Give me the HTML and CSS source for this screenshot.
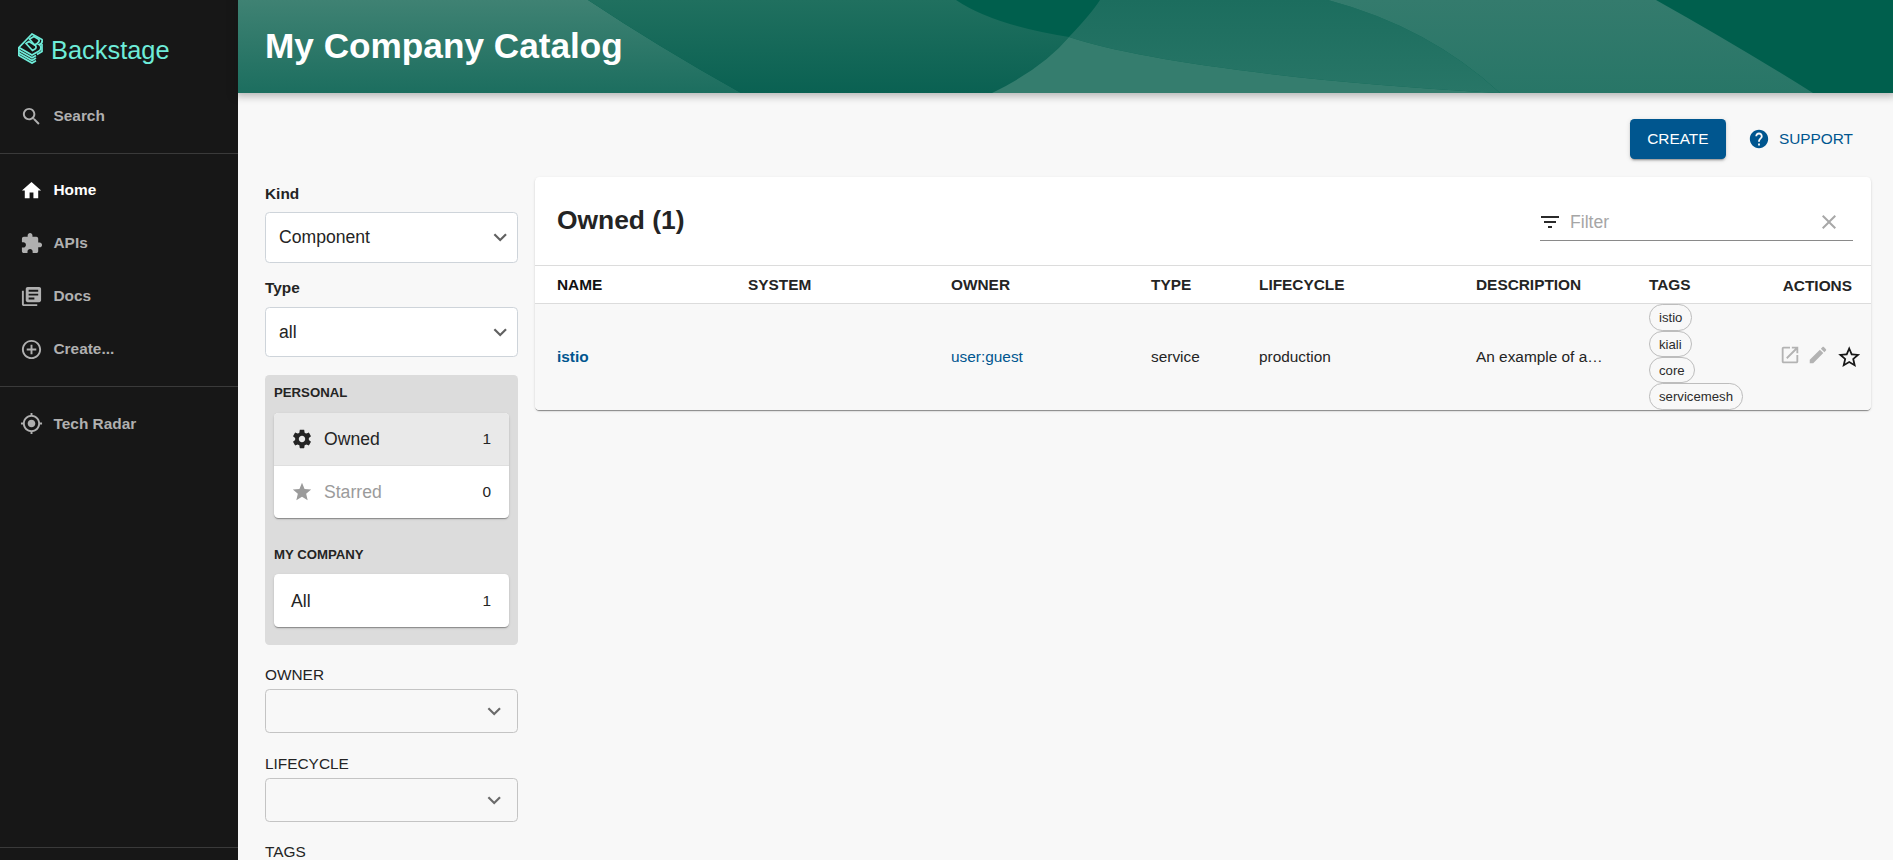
FILE: index.html
```html
<!DOCTYPE html>
<html lang="en">
<head>
    <meta charset="UTF-8">
    <title>My Company Catalog</title>
    <link rel="stylesheet" href="styles.css">
</head>
<body>
    <div class="app">
        <nav class="sidebar">
            <div class="logo">
                <svg class="logo-mark" viewBox="0 0 25 31" fill="none" stroke="#6eecd9" stroke-width="1.7">
                    <path d="M14 1 L24 6.5 C24.5 9 23.5 11 21 11.5 C23.5 13 23.5 16.5 21 18 L14 22 L1 14.5 Z"/>
                    <path d="M11.5 6 L16 3.5 L21 6.5 C21.5 8 20.5 9.5 19 10.5 L16.5 12 Z"/>
                    <path d="M8 10.5 L11 8.5 L17.5 12.5 C18.5 14 18 15.5 17 16 L14.5 17.5 Z"/>
                    <path d="M.8 17.2 L14 24.7 L18 22.4"/>
                    <path d="M.8 19.9 L14 27.4 L18 25.1"/>
                    <path d="M.8 22.6 L14 30.1 L18 27.8"/>
                    <path d="M.8 14.5 V23 M24 11 V18.5 L19 21.5"/>
                </svg>
                <span class="logo-text">Backstage</span>
            </div>
            <a class="nav-item nav-search">
                <svg class="icon" viewBox="0 0 24 24"><path d="M15.5 14h-.79l-.28-.27C15.41 12.59 16 11.11 16 9.5 16 5.91 13.09 3 9.5 3S3 5.91 3 9.5 5.91 16 9.5 16c1.61 0 3.09-.59 4.23-1.57l.27.28v.79l5 4.99L20.49 19l-4.99-5zm-6 0C7.01 14 5 11.99 5 9.5S7.01 5 9.5 5 14 7.01 14 9.5 11.99 14 9.5 14z"/></svg>
                Search
            </a>
            <div class="nav-divider nav-divider-first"></div>
            <div class="nav-group">
                <a class="nav-item active">
                    <svg class="icon" viewBox="0 0 24 24"><path d="M10 20v-6h4v6h5v-8h3L12 3 2 12h3v8z"/></svg>
                    Home
                </a>
                <a class="nav-item">
                    <svg class="icon" viewBox="0 0 24 24"><path d="M20.5 11H19V7c0-1.1-.9-2-2-2h-4V3.5C13 2.12 11.88 1 10.5 1S8 2.12 8 3.5V5H4c-1.1 0-1.99.9-1.99 2v3.8H3.5c1.49 0 2.7 1.21 2.7 2.7s-1.21 2.7-2.7 2.7H2V20c0 1.1.9 2 2 2h3.8v-1.5c0-1.49 1.21-2.7 2.7-2.7 1.49 0 2.7 1.21 2.7 2.7V22H17c1.1 0 2-.9 2-2v-4h1.5c1.38 0 2.5-1.12 2.5-2.5S21.88 11 20.5 11z"/></svg>
                    APIs
                </a>
                <a class="nav-item">
                    <svg class="icon" viewBox="0 0 24 24"><path d="M4 6H2v14c0 1.1.9 2 2 2h14v-2H4V6zm16-4H8c-1.1 0-2 .9-2 2v12c0 1.1.9 2 2 2h12c1.1 0 2-.9 2-2V4c0-1.1-.9-2-2-2zm-1 9H9V9h10v2zm-4 4H9v-2h6v2zm4-8H9V5h10v2z"/></svg>
                    Docs
                </a>
                <a class="nav-item">
                    <svg class="icon" viewBox="0 0 24 24"><path d="M13 7h-2v4H7v2h4v4h2v-4h4v-2h-4V7zm-1-5C6.48 2 2 6.48 2 12s4.48 10 10 10 10-4.48 10-10S17.52 2 12 2zm0 18c-4.41 0-8-3.59-8-8s3.59-8 8-8 8 3.59 8 8-3.59 8-8 8z"/></svg>
                    Create...
                </a>
            </div>
            <div class="nav-divider"></div>
            <div class="nav-group nav-group-radar">
                <a class="nav-item">
                    <svg class="icon" viewBox="0 0 24 24"><path d="M12 8c-2.21 0-4 1.79-4 4s1.79 4 4 4 4-1.79 4-4-1.79-4-4-4zm8.94 3c-.46-4.17-3.77-7.48-7.94-7.94V1h-2v2.06C6.83 3.52 3.52 6.83 3.06 11H1v2h2.06c.46 4.17 3.77 7.48 7.94 7.94V23h2v-2.06c4.17-.46 7.48-3.77 7.94-7.94H23v-2h-2.06zM12 19c-3.87 0-7-3.13-7-7s3.13-7 7-7 7 3.13 7 7-3.13 7-7 7z"/></svg>
                    Tech Radar
                </a>
            </div>
            <div class="nav-spacer"></div>
            <div class="nav-divider nav-divider-last"></div>
        </nav>

        <div class="main">
            <header class="page-header">
                <svg class="wave" viewBox="0 0 1655 93" preserveAspectRatio="none">
                    <defs>
                        <linearGradient id="g0" x1="0.4" y1="0" x2="0.4" y2="1"><stop offset="0" stop-color="#3f8273"/><stop offset="1" stop-color="#1c6e5f"/></linearGradient>
                        <linearGradient id="g1" x1="0" y1="0" x2="0" y2="1"><stop offset="0" stop-color="#20705f"/><stop offset="1" stop-color="#0a6152"/></linearGradient>
                        <linearGradient id="g3" x1="0" y1="0" x2="0" y2="1"><stop offset="0" stop-color="#1c6d5e"/><stop offset="1" stop-color="#287667"/></linearGradient>
                        <linearGradient id="g5" x1="0" y1="0" x2="0" y2="1"><stop offset="0" stop-color="#347b6d"/><stop offset="1" stop-color="#287667"/></linearGradient>
                    </defs>
                    <rect width="1655" height="93" fill="#005f4d"/>
                    <path fill="url(#g0)" d="M0 0 L350 0 Q419 46 503 93 L0 93 Z"/>
                    <path fill="url(#g1)" d="M350 0 L718 0 Q755 25 831 37 Q805 68 754 93 L503 93 Q419 46 350 0 Z"/>
                    <path fill="url(#g3)" d="M862 0 L1090 0 Q1191 27 1262 93 C1060 82 900 60 831 37 Q853 14 862 0 Z"/>
                    <path fill="#357d6e" d="M831 37 C900 60 1060 82 1262 93 L754 93 Q805 68 831 37 Z"/>
                    <path fill="url(#g5)" d="M1090 0 L1418 0 Q1500 46 1575 93 L1262 93 Q1191 27 1090 0 Z"/>
                </svg>
                <h1 class="page-title">My Company Catalog</h1>
            </header>

            <div class="page-body">
                <div class="toolbar">
                    <a class="btn-create">CREATE</a>
                    <a class="btn-support">
                        <svg class="icon" viewBox="0 0 24 24"><path d="M12 2C6.48 2 2 6.48 2 12s4.48 10 10 10 10-4.48 10-10S17.52 2 12 2zm1 17h-2v-2h2v2zm2.07-7.75l-.9.92C13.45 12.9 13 13.5 13 15h-2v-.5c0-1.1.45-2.1 1.17-2.83l1.24-1.26c.37-.36.59-.86.59-1.41 0-1.1-.9-2-2-2s-2 .9-2 2H8c0-2.21 1.79-4 4-4s4 1.79 4 4c0 .88-.36 1.68-.93 2.25z"/></svg>
                        SUPPORT
                    </a>
                </div>

                <div class="content">
                    <aside class="filters">
                        <div class="label label-kind">Kind</div>
                        <div class="select select-kind">
                            Component
                            <svg class="icon" viewBox="0 0 24 24"><path d="M16.59 8.59L12 13.17 7.41 8.59 6 10l6 6 6-6z"/></svg>
                        </div>
                        <div class="label label-type">Type</div>
                        <div class="select select-type">
                            all
                            <svg class="icon" viewBox="0 0 24 24"><path d="M16.59 8.59L12 13.17 7.41 8.59 6 10l6 6 6-6z"/></svg>
                        </div>

                        <div class="picker">
                            <div class="picker-title">PERSONAL</div>
                            <div class="picker-card">
                                <div class="picker-row selected">
                                    <svg class="icon" viewBox="0 0 24 24"><path d="M19.43 12.98c.04-.32.07-.64.07-.98s-.03-.66-.07-.98l2.11-1.65c.19-.15.24-.42.12-.64l-2-3.46c-.12-.22-.39-.3-.61-.22l-2.49 1c-.52-.4-1.08-.73-1.69-.98l-.38-2.65C14.46 2.18 14.25 2 14 2h-4c-.25 0-.46.18-.49.42l-.38 2.65c-.61.25-1.17.59-1.69.98l-2.49-1c-.23-.09-.49 0-.61.22l-2 3.46c-.13.22-.07.49.12.64l2.11 1.65c-.04.32-.07.65-.07.98s.03.66.07.98l-2.11 1.65c-.19.15-.24.42-.12.64l2 3.46c.12.22.39.3.61.22l2.49-1c.52.4 1.08.73 1.69.98l.38 2.65c.03.24.24.42.49.42h4c.25 0 .46-.18.49-.42l.38-2.65c.61-.25 1.17-.59 1.69-.98l2.49 1c.23.09.49 0 .61-.22l2-3.46c.12-.22.07-.49-.12-.64l-2.11-1.65zM12 15.5c-1.93 0-3.5-1.57-3.5-3.5s1.57-3.5 3.5-3.5 3.5 1.57 3.5 3.5-1.57 3.5-3.5 3.5z"/></svg>
                                    <span class="picker-name">Owned</span>
                                    <span class="picker-count">1</span>
                                </div>
                                <div class="picker-row muted">
                                    <svg class="icon" viewBox="0 0 24 24"><path d="M12 17.27L18.18 21l-1.64-7.03L22 9.24l-7.19-.61L12 2 9.19 8.63 2 9.24l5.46 4.73L5.82 21z"/></svg>
                                    <span class="picker-name">Starred</span>
                                    <span class="picker-count">0</span>
                                </div>
                            </div>
                            <div class="picker-title picker-title-second">MY COMPANY</div>
                            <div class="picker-card">
                                <div class="picker-row picker-row-plain">
                                    <span class="picker-name">All</span>
                                    <span class="picker-count">1</span>
                                </div>
                            </div>
                        </div>

                        <div class="field-label field-owner">OWNER</div>
                        <div class="combo">
                            <svg class="icon" viewBox="0 0 24 24"><path d="M16.59 8.59L12 13.17 7.41 8.59 6 10l6 6 6-6z"/></svg>
                        </div>
                        <div class="field-label">LIFECYCLE</div>
                        <div class="combo">
                            <svg class="icon" viewBox="0 0 24 24"><path d="M16.59 8.59L12 13.17 7.41 8.59 6 10l6 6 6-6z"/></svg>
                        </div>
                        <div class="field-label field-tags">TAGS</div>
                    </aside>

                    <section class="card">
                        <div class="card-header">
                            <h2 class="card-title">Owned (1)</h2>
                            <div class="search-box">
                                <svg class="icon" viewBox="0 0 24 24"><path d="M10 18h4v-2h-4v2zM3 6v2h18V6H3zm3 7h12v-2H6v2z"/></svg>
                                <span class="search-text">Filter</span>
                                <svg class="icon icon-clear" viewBox="0 0 24 24"><path d="M19 6.41L17.59 5 12 10.59 6.41 5 5 6.41 10.59 12 5 17.59 6.41 19 12 13.41 17.59 19 19 17.59 13.41 12z"/></svg>
                            </div>
                        </div>
                        <table class="table">
                            <thead>
                                <tr>
                                    <th class="col-name">NAME</th>
                                    <th class="col-system">SYSTEM</th>
                                    <th class="col-owner">OWNER</th>
                                    <th class="col-type">TYPE</th>
                                    <th class="col-lifecycle">LIFECYCLE</th>
                                    <th class="col-desc">DESCRIPTION</th>
                                    <th class="col-tags">TAGS</th>
                                    <th class="col-actions">ACTIONS</th>
                                </tr>
                            </thead>
                            <tbody>
                                <tr>
                                    <td><a class="link link-bold">istio</a></td>
                                    <td></td>
                                    <td><a class="link">user:guest</a></td>
                                    <td>service</td>
                                    <td>production</td>
                                    <td>An example of a…</td>
                                    <td class="cell-tags">
                                        <div class="chips">
                                            <span class="chip">istio</span>
                                            <span class="chip">kiali</span>
                                            <span class="chip">core</span>
                                            <span class="chip">servicemesh</span>
                                        </div>
                                    </td>
                                    <td>
                                        <div class="actions">
                                            <svg class="icon action-small" viewBox="0 0 24 24"><path d="M19 19H5V5h7V3H5c-1.11 0-2 .9-2 2v14c0 1.1.89 2 2 2h14c1.1 0 2-.9 2-2v-7h-2v7zM14 3v2h3.59l-9.83 9.83 1.41 1.41L19 6.41V10h2V3h-7z"/></svg>
                                            <svg class="icon action-small" viewBox="0 0 24 24"><path d="M3 17.25V21h3.75L17.81 9.94l-3.75-3.75L3 17.25zM20.71 7.04c.39-.39.39-1.02 0-1.41l-2.34-2.34c-.39-.39-1.02-.39-1.41 0l-1.83 1.83 3.75 3.75 1.83-1.83z"/></svg>
                                            <svg class="icon action-star" viewBox="0 0 24 24"><path d="M22 9.24l-7.19-.62L12 2 9.19 8.63 2 9.24l5.46 4.73L5.82 21 12 17.27 18.18 21l-1.63-7.03L22 9.24zM12 15.4l-3.76 2.27 1-4.28-3.32-2.88 4.38-.38L12 6.1l1.71 4.04 4.38.38-3.32 2.88 1 4.28L12 15.4z"/></svg>
                                        </div>
                                    </td>
                                </tr>
                            </tbody>
                        </table>
                    </section>
                </div>
            </div>
        </div>
    </div>
</body>
</html>
```

FILE: styles.css
```css
:root {
    --primary: #00568f;
    --text: #242424;
    --line: #dcdcdc;
}

* {
    box-sizing: border-box;
}

body {
    margin: 0;
    height: 860px;
    overflow: hidden;
    background: #f8f8f8;
    color: var(--text);
    font-family: "Liberation Sans", Arial, sans-serif;
    font-size: 15.4px;
}

.icon {
    width: 26.4px;
    height: 26.4px;
    flex: none;
    fill: currentColor;
}

.app {
    display: flex;
    height: 860px;
}

/* Sidebar */
.sidebar {
    width: 238px;
    flex: none;
    display: flex;
    flex-direction: column;
    background: #171717;
    color: #b0b0b0;
}

.logo {
    height: 93px;
    display: flex;
    align-items: center;
    padding: 4px 0 0 18px;
    gap: 8px;
}

.logo-mark {
    width: 25px;
    height: 31px;
}

.logo-text {
    margin-top: 4px;
    color: #6eecd9;
    font-size: 25.4px;
    line-height: 1;
}

.nav-item {
    height: 53px;
    display: flex;
    align-items: center;
    gap: 10.5px;
    padding-left: 20px;
    font-weight: 700;
}

.nav-item .icon {
    width: 23px;
    height: 23px;
}

.nav-item.active {
    color: #fff;
}

.nav-search {
    height: 46px;
}

.nav-divider {
    height: 1px;
    flex: none;
    margin-top: 10.5px;
    background: #3a3a3a;
}

.nav-divider-first {
    margin-top: 14px;
}

.nav-divider-last {
    margin: 0 0 12px;
}

.nav-group {
    margin-top: 9.5px;
}

.nav-group-radar {
    margin-top: 10px;
}

.nav-spacer {
    flex: 1;
}

/* Header */
.main {
    flex: 1;
    min-width: 0;
}

.page-header {
    position: relative;
    height: 93px;
    display: flex;
    align-items: center;
    padding-left: 27px;
    box-shadow: 0 0 8px 3px rgba(20, 20, 20, 0.3);
}

.wave {
    position: absolute;
    left: 0;
    top: 0;
    width: 100%;
    height: 100%;
}

.page-title {
    position: relative;
    margin: 0 0 1px;
    color: #fff;
    font-size: 35.2px;
    font-weight: 700;
}

/* Page */
.page-body {
    padding: 26px 22px 0 27px;
}

.toolbar {
    height: 40px;
    margin-bottom: 18px;
    display: flex;
    justify-content: flex-end;
    align-items: center;
    padding-right: 18px;
}

.btn-create {
    width: 96px;
    height: 40px;
    display: flex;
    align-items: center;
    justify-content: center;
    background: var(--primary);
    color: #fff;
    border-radius: 4.4px;
    box-shadow: 0 3px 1px -2px rgba(0, 0, 0, 0.2), 0 2px 2px 0 rgba(0, 0, 0, 0.14), 0 1px 5px 0 rgba(0, 0, 0, 0.12);
}

.btn-support {
    display: flex;
    align-items: center;
    gap: 9px;
    margin-left: 22px;
    color: var(--primary);
}

.btn-support .icon {
    width: 22px;
    height: 22px;
}

.content {
    display: grid;
    grid-template-columns: 253px 1fr;
    gap: 17px;
    align-items: start;
}

/* Filters */
.label {
    height: 18px;
    line-height: 18px;
    font-weight: 700;
}

.label-kind {
    margin: 8px 0 9px;
}

.label-type {
    margin: 16px 0 10px;
}

.select {
    display: flex;
    align-items: center;
    justify-content: space-between;
    padding: 0 4px 0 13px;
    background: #fff;
    border: 1px solid #ced4da;
    border-radius: 4.4px;
    font-size: 17.6px;
}

.select .icon {
    color: #616161;
}

.select-kind {
    height: 51px;
}

.select-type {
    height: 50px;
}

.picker {
    height: 270px;
    margin-top: 18px;
    padding: 10px 9px 9px;
    background: #dcdcdc;
    border-radius: 4.4px;
}

.picker-title {
    height: 16px;
    line-height: 16px;
    margin-bottom: 12px;
    font-size: 13.2px;
    font-weight: 700;
}

.picker-title-second {
    margin: 29px 0 11px;
}

.picker-card {
    background: #fff;
    border-radius: 4.4px;
    box-shadow: 0 2px 1px -1px rgba(0, 0, 0, 0.2), 0 1px 1px 0 rgba(0, 0, 0, 0.14), 0 1px 3px 0 rgba(0, 0, 0, 0.12);
    overflow: hidden;
}

.picker-row {
    height: 52.5px;
    display: flex;
    align-items: center;
    padding: 0 18px 0 17px;
    gap: 11px;
}

.picker-row .icon {
    width: 22px;
    height: 22px;
}

.picker-row.selected {
    background: #e9e9e9;
    border-bottom: 1px solid #dfdfdf;
}

.picker-row.muted .picker-name,
.picker-row.muted .icon {
    color: #9b9b9b;
}

.picker-row-plain {
    height: 53px;
}

.picker-name {
    flex: 1;
    padding-top: 2px;
    font-size: 17.6px;
}

.picker-count {
    padding-top: 1px;
}

.field-label {
    height: 18px;
    line-height: 18px;
    margin: 22px 0 5px;
}

.field-owner {
    margin-top: 21px;
}

.field-tags {
    margin-top: 21px;
}

.combo {
    height: 44px;
    display: flex;
    align-items: center;
    justify-content: flex-end;
    padding-right: 10px;
    border: 1px solid #c4c4c4;
    border-radius: 4.4px;
    color: #6b6b6b;
}

/* Table card */
.card {
    background: #fff;
    border-radius: 4.4px;
    box-shadow: 0 2px 1px -1px rgba(0, 0, 0, 0.3), 0 1px 1px 0 rgba(0, 0, 0, 0.14), 0 1px 3px 0 rgba(0, 0, 0, 0.12);
    overflow: hidden;
}

.card-header {
    height: 89px;
    display: flex;
    justify-content: space-between;
    align-items: flex-start;
    padding: 27px 18px 0 22px;
    border-bottom: 1px solid var(--line);
}

.card-title {
    margin: 0;
    font-size: 26.4px;
    line-height: 32px;
    font-weight: 700;
}

.search-box {
    width: 313px;
    height: 38px;
    margin-top: -1px;
    display: flex;
    align-items: center;
    border-bottom: 1px solid #8a8a8a;
    color: #2a2a2a;
}

.search-box .icon:first-child {
    width: 24px;
    height: 24px;
    margin-left: -2.5px;
}

.search-text {
    flex: 1;
    padding: 2px 0 0 8.5px;
    color: #a6a6a6;
    font-size: 17.6px;
}

.search-box .icon-clear {
    width: 24px;
    height: 24px;
    margin-right: 12px;
    color: #a8a8a8;
}

.table {
    width: 100%;
    table-layout: fixed;
    border-collapse: separate;
    border-spacing: 0;
}

.table th,
.table td {
    padding: 0 0 0 22px;
    text-align: left;
}

.table th {
    height: 38px;
    border-bottom: 1px solid var(--line);
    font-weight: 700;
}

.table td {
    height: 106px;
    background: #f8f8f8;
    white-space: nowrap;
}

.col-name { width: 191px; }
.col-system { width: 203px; }
.col-owner { width: 200px; }
.col-type { width: 108px; }
.col-lifecycle { width: 217px; }
.col-desc { width: 174px; }
.col-tags { width: 123px; }
.col-actions { width: 120px; }

.table th.col-name {
    color: #111;
}

.table th.col-tags {
    padding-left: 21px;
}

.table th.col-actions {
    padding: 3px 19px 0 0;
    text-align: right;
}

.link {
    color: var(--primary);
}

.link-bold {
    font-weight: 700;
}

.chips {
    display: flex;
    flex-direction: column;
    align-items: flex-start;
}

.chip {
    height: 26.4px;
    line-height: 26px;
    padding: 0 9px;
    border: 1px solid #bdbdbd;
    border-radius: 13.2px;
    color: #2b2b2b;
    font-size: 13.2px;
}

.table td.cell-tags {
    padding-left: 21px;
}

.actions {
    display: flex;
    align-items: center;
    gap: 6.5px;
    padding-left: 5.5px;
}

.action-small {
    width: 22px;
    height: 22px;
    margin-top: -3px;
    color: #b3b3b3;
}

.action-star {
    color: #181818;
}
```
